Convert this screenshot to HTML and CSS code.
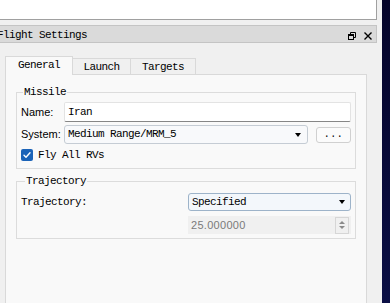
FILE: index.html
```html
<!DOCTYPE html>
<html lang="en">
<head>
    <meta charset="UTF-8">
    <meta name="viewport" content="width=device-width, initial-scale=1.0">
    <title>Flight Settings</title>
    <link rel="stylesheet" href="styles.css">
</head>
<body>
    <div class="window">
        <div class="top-view"></div>

        <div class="dock-title">
            <span class="dock-name">Flight Settings</span>
            <span class="dock-buttons">
                <svg class="dock-btn" width="8" height="8" viewBox="0 0 8 8">
                    <path d="M2.5 0.5h5v5h-2" fill="none" stroke="#000" stroke-width="1"/>
                    <path d="M2.5 0.5v2" fill="none" stroke="#000" stroke-width="1"/>
                    <rect x="0.5" y="2.5" width="5" height="5" fill="none" stroke="#000" stroke-width="1"/>
                    <path d="M0.5 3h5" stroke="#000" stroke-width="2"/>
                </svg>
                <svg class="dock-btn" width="8" height="8" viewBox="0 0 8 8">
                    <path d="M0.5 0.5l7 7M7.5 0.5l-7 7" stroke="#000" stroke-width="1.4"/>
                </svg>
            </span>
        </div>

        <div class="tabs">
            <div class="tab-bar">
                <div class="tab tab-general active">General</div>
                <div class="tab tab-launch">Launch</div>
                <div class="tab tab-targets">Targets</div>
            </div>

            <div class="tab-pane">
                <div class="group missile">
                    <div class="group-title">Missile</div>

                    <div class="row">
                        <span class="label">Name:</span>
                        <div class="line-edit">Iran</div>
                    </div>

                    <div class="row row-system">
                        <span class="label">System:</span>
                        <div class="combo">
                            <span>Medium Range/MRM_5</span>
                            <span class="arrow"></span>
                        </div>
                        <div class="tool-btn">...</div>
                    </div>

                    <div class="row row-check">
                        <span class="check">
                            <svg width="12" height="12" viewBox="0 0 12 12">
                                <path d="M3 6.2l2 2 4-4.4" fill="none" stroke="#fff" stroke-width="1.4" stroke-linecap="round" stroke-linejoin="round"/>
                            </svg>
                        </span>
                        <span class="check-text">Fly All RVs</span>
                    </div>
                </div>

                <div class="group trajectory">
                    <div class="group-title">Trajectory</div>

                    <div class="traj-grid">
                        <span class="traj-label">Trajectory:</span>
                        <div class="combo combo-focus">
                            <span>Specified</span>
                            <span class="arrow"></span>
                        </div>

                        <span></span>
                        <div class="spin">
                            <span>25.000000</span>
                            <span class="spin-btns">
                                <span class="spin-up"></span>
                                <span class="spin-down"></span>
                            </span>
                        </div>
                    </div>
                </div>
            </div>
        </div>
    </div>
</body>
</html>
```

FILE: styles.css
```css
body {
    margin: 0;
    width: 390px;
    height: 303px;
    overflow: hidden;
    background: linear-gradient(180deg, #05042a 0%, #0b0f45 100%);
    font-family: "Liberation Mono", monospace;
    font-size: 11px;
    letter-spacing: -0.6px;
    color: #000;
}
.window {
    width: 382px;
    height: 303px;
    background: #f0f0f0;
    display: flex;
    flex-direction: column;
}
.top-view {
    width: 376px;
    height: 19px;
    background: #fff;
    border-right: 1px solid #a0a0a0;
    border-bottom: 1px solid #a0a0a0;
}
.dock-title {
    margin-top: 5px;
    width: 376px;
    height: 16px;
    background: #dadada;
    border-top: 1px solid #c4c4c4;
    border-bottom: 1px solid #c4c4c4;
    border-right: 1px solid #c4c4c4;
    display: flex;
    align-items: center;
    justify-content: space-between;
}
.dock-name {
    margin-left: -3px;
    line-height: 16px;
    padding-top: 2px;
}
.dock-buttons {
    display: flex;
    gap: 8px;
    margin-right: 4px;
    padding-top: 3px;
}
.dock-btn {
    display: block;
}
.tabs {
    flex: 1;
    display: flex;
    flex-direction: column;
    margin-top: 13px;
}
.tab-bar {
    display: flex;
    align-items: flex-end;
    height: 18px;
    margin-left: 5px;
    position: relative;
    z-index: 1;
}
.tab {
    height: 15px;
    line-height: 16px;
    text-align: center;
    background: #f0f0f0;
    border: 1px solid #d9d9d9;
    border-bottom: none;
    margin-left: -1px;
}
.tab.active {
    height: 18px;
    line-height: 17px;
    background: #f9f9f9;
    margin-bottom: -1px;
    margin-left: 0;
}
.tab-general { width: 66px; }
.tab-launch { width: 57px; }
.tab-targets { width: 64px; }
.tab-pane {
    flex: 1;
    margin-left: 5px;
    width: 360px;
    background: #f9f9f9;
    border: 1px solid #d9d9d9;
    border-bottom: none;
}
.group {
    margin: 17px 10px 0 10px;
    border: 1px solid #dcdcdc;
}
.group-title {
    width: fit-content;
    height: 12px;
    line-height: 12px;
    margin-top: -7px;
    padding: 0 1px;
    background: #f9f9f9;
}
.missile {
    padding: 0 4px 4px 4px;
}
.missile .group-title {
    margin-left: 2px;
    margin-bottom: 4px;
}
.row {
    display: flex;
    align-items: center;
}
.label {
    width: 43px;
    font-family: "Liberation Sans", sans-serif;
    font-size: 11px;
    letter-spacing: 0;
}
.line-edit {
    flex: 1;
    height: 18px;
    line-height: 19px;
    padding-left: 3px;
    background: #fff;
    border: 1px solid #e3e3e3;
    border-bottom-color: #868686;
    border-radius: 2px;
}
.row-system {
    margin-top: 3px;
    align-items: flex-start;
}
.row-system .label {
    line-height: 19px;
}
.combo {
    flex: 1;
    height: 17px;
    padding: 0 6px 0 3px;
    background: #f8f9fb;
    border: 1px solid #c5ccd4;
    border-radius: 3px;
    display: flex;
    align-items: center;
    justify-content: space-between;
    line-height: 17px;
}
.arrow {
    width: 0;
    height: 0;
    border-left: 3.5px solid transparent;
    border-right: 3.5px solid transparent;
    border-top: 4px solid #000;
}
.tool-btn {
    width: 33px;
    height: 14px;
    margin: 2px 0 0 8px;
    background: #fbfbfb;
    border: 1px solid #d0d0d0;
    border-radius: 3px;
    text-align: center;
    line-height: 14px;
    font-size: 10px;
    letter-spacing: 0.5px;
}
.row-check {
    margin-top: 2px;
    height: 18px;
    gap: 5px;
}
.check {
    width: 12px;
    height: 12px;
    border-radius: 2px;
    background: #1b63b8;
    display: flex;
}
.trajectory {
    margin-top: 12px;
    padding: 0 4px 4px 4px;
}
.trajectory .group-title {
    margin-left: 4px;
    margin-bottom: 6px;
}
.traj-grid {
    display: grid;
    grid-template-columns: 167px 163px;
    row-gap: 5px;
    align-items: center;
}
.combo-focus {
    height: 16px;
    line-height: 16px;
    background: #f3f7fb;
    border-color: #9db3c9;
    padding-right: 5px;
}
.spin {
    height: 18px;
    padding: 0 2px 0 3px;
    background: #f0f0f0;
    display: flex;
    align-items: center;
    justify-content: space-between;
    font-family: "Liberation Sans", sans-serif;
    font-size: 11px;
    letter-spacing: 0.3px;
    color: #7a7a7a;
}
.spin-btns {
    width: 12px;
    height: 15px;
    border: 1px solid #d6d6d6;
    display: flex;
    flex-direction: column;
    align-items: center;
    justify-content: center;
    gap: 2px;
}
.spin-up {
    width: 0;
    height: 0;
    border-left: 3px solid transparent;
    border-right: 3px solid transparent;
    border-bottom: 3px solid #8a8a8a;
}
.spin-down {
    width: 0;
    height: 0;
    border-left: 3px solid transparent;
    border-right: 3px solid transparent;
    border-top: 3px solid #8a8a8a;
}
```
